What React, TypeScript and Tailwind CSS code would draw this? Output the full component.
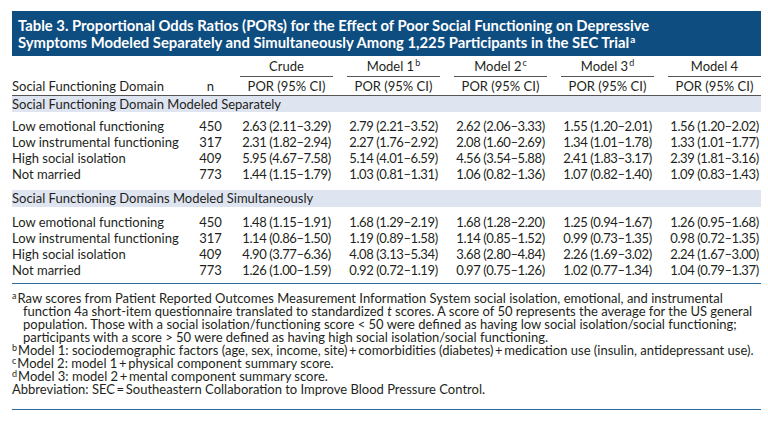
const rows1 = [
  ['Low emotional functioning', '450', '2.63 (2.11–3.29)', '2.79 (2.21–3.52)', '2.62 (2.06–3.33)', '1.55 (1.20–2.01)', '1.56 (1.20–2.02)'],
  ['Low instrumental functioning', '317', '2.31 (1.82–2.94)', '2.27 (1.76–2.92)', '2.08 (1.60–2.69)', '1.34 (1.01–1.78)', '1.33 (1.01–1.77)'],
  ['High social isolation', '409', '5.95 (4.67–7.58)', '5.14 (4.01–6.59)', '4.56 (3.54–5.88)', '2.41 (1.83–3.17)', '2.39 (1.81–3.16)'],
  ['Not married', '773', '1.44 (1.15–1.79)', '1.03 (0.81–1.31)', '1.06 (0.82–1.36)', '1.07 (0.82–1.40)', '1.09 (0.83–1.43)'],
];

const rows2 = [
  ['Low emotional functioning', '450', '1.48 (1.15–1.91)', '1.68 (1.29–2.19)', '1.68 (1.28–2.20)', '1.25 (0.94–1.67)', '1.26 (0.95–1.68)'],
  ['Low instrumental functioning', '317', '1.14 (0.86–1.50)', '1.19 (0.89–1.58)', '1.14 (0.85–1.52)', '0.99 (0.73–1.35)', '0.98 (0.72–1.35)'],
  ['High social isolation', '409', '4.90 (3.77–6.36)', '4.08 (3.13–5.34)', '3.68 (2.80–4.84)', '2.26 (1.69–3.02)', '2.24 (1.67–3.00)'],
  ['Not married', '773', '1.26 (1.00–1.59)', '0.92 (0.72–1.19)', '0.97 (0.75–1.26)', '1.02 (0.77–1.34)', '1.04 (0.79–1.37)'],
];

const models: [string, string][] = [
  ['Crude', ''],
  ['Model 1', 'b'],
  ['Model 2', 'c'],
  ['Model 3', 'd'],
  ['Model 4', ''],
];

// label | n | 5 model columns
const grid = 'grid grid-cols-[169px_31px_repeat(5,93px)] gap-x-[14px]';

function DataRows({ rows }: { rows: string[][] }) {
  return (
    <div className="flex flex-col">
      {rows.map(r => (
        <div key={r[0]} className={`${grid} h-[16px] items-center leading-[16px]`}>
          <span className="whitespace-nowrap">{r[0]}</span>
          <span className="text-center">{r[1]}</span>
          {r.slice(2).map((v, i) => (
            <span key={i} className="text-center whitespace-nowrap tracking-[-0.4px]">{v}</span>
          ))}
        </div>
      ))}
    </div>
  );
}

function Note({ mark, indent, children }: { mark?: string; indent?: boolean; children: React.ReactNode }) {
  return (
    <div className={`h-[13px] leading-[13px] whitespace-nowrap ${indent ? 'pl-[11px]' : ''}`}>
      {mark && <span className="text-[9px] relative -top-[4px] mr-[1px]">{mark}</span>}
      {children}
    </div>
  );
}

export default function App() {
  return (
    <div
      className="w-[768px] h-[432px] bg-white text-[#231f20] text-[13px] overflow-hidden"
      style={{ fontFamily: 'Lato, "Open Sans", sans-serif' }}
    >
      <div className="ml-[12px] w-[749px] pt-[11px]">
        {/* title bar */}
        <div className="bg-[#0e4d80] text-white font-bold text-[14.8px] leading-[17px] pl-[6px] pt-[6px] pb-[5px] h-[45px]">
          <div className="whitespace-nowrap">
            Table 3. Proportional Odds Ratios (PORs) for the Effect of Poor Social Functioning on Depressive
          </div>
          <div className="whitespace-nowrap">
            Symptoms Modeled Separately and Simultaneously Among 1,225 Participants in the SEC Trial
            <span className="text-[10px] relative -top-[5px] ml-[1px]">a</span>
          </div>
        </div>

        {/* column group heads */}
        <div className={`${grid} h-[21px]`}>
          <span />
          <span />
          {models.map(([m, s]) => (
            <div key={m} className="flex items-center justify-center border-b border-[#555] leading-none">
              {m}
              {s && <span className="text-[9px] ml-[1px] relative -top-[4px]">{s}</span>}
            </div>
          ))}
        </div>
        <div className={`${grid} h-[19px] items-center border-b border-[#555]`}>
          <span className="whitespace-nowrap">Social Functioning Domain</span>
          <span className="text-center">n</span>
          {models.map(([m]) => (
            <span key={m} className="text-center whitespace-nowrap">POR (95% CI)</span>
          ))}
        </div>

        {/* section 1 */}
        <div className="bg-[#dfe4f1] h-[16px] leading-[16px]">Social Functioning Domain Modeled Separately</div>
        <div className="pt-[6px] pb-[8px]">
          <DataRows rows={rows1} />
        </div>

        {/* section 2 */}
        <div className="bg-[#dfe4f1] h-[17px] leading-[17px]">Social Functioning Domains Modeled Simultaneously</div>
        <div className="pt-[7px] pb-[5px] border-b border-[#2b6a9c]">
          <DataRows rows={rows2} />
        </div>

        {/* footnotes */}
        <div className="pt-[8px] pb-[13px] border-b border-[#2b6a9c]">
          <Note mark="a">
            Raw scores from Patient Reported Outcomes Measurement Information System social isolation, emotional, and instrumental
          </Note>
          <Note indent>
            function 4a short-item questionnaire translated to standardized <i>t</i> scores. A score of 50 represents the average for the US general
          </Note>
          <Note indent>
            population. Those with a social isolation/functioning score &lt; 50 were defined as having low social isolation/social functioning;
          </Note>
          <Note indent>
            participants with a score &gt; 50 were defined as having high social isolation/social functioning.
          </Note>
          <Note mark="b">
            Model 1: sociodemographic factors (age, sex, income, site)&thinsp;+&thinsp;comorbidities (diabetes)&thinsp;+&thinsp;medication use (insulin, antidepressant use).
          </Note>
          <Note mark="c">Model 2: model 1&thinsp;+&thinsp;physical component summary score.</Note>
          <Note mark="d">Model 3: model 2&thinsp;+&thinsp;mental component summary score.</Note>
          <Note>Abbreviation: SEC&thinsp;=&thinsp;Southeastern Collaboration to Improve Blood Pressure Control.</Note>
        </div>
      </div>
    </div>
  );
}
